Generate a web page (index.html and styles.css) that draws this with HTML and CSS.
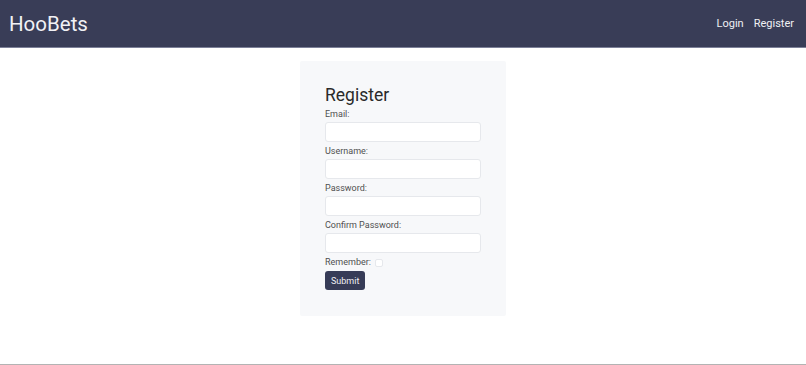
FILE: index.html
```html
<!DOCTYPE html>
<html>
<head>
<meta charset="utf-8">
<link rel="stylesheet" href="styles.css">
</head>
<body>
<header class="topbar">
  <div class="brand">HooBets</div>
  <nav class="nav">
    <a href="#" class="nav-link">Login</a>
    <a href="#" class="nav-link">Register</a>
  </nav>
</header>
<main class="main">
  <form class="card">
    <h1 class="title">Register</h1>
    <div class="field">
      <label class="label">Email:</label>
      <input class="input" type="text">
    </div>
    <div class="field">
      <label class="label">Username:</label>
      <input class="input" type="text">
    </div>
    <div class="field">
      <label class="label">Password:</label>
      <input class="input" type="password">
    </div>
    <div class="field">
      <label class="label">Confirm Password:</label>
      <input class="input" type="password">
    </div>
    <div class="check-row">
      <label class="label">Remember:</label>
      <span class="checkbox"></span>
    </div>
    <button type="button" class="submit">Submit</button>
  </form>
</main>
<footer class="footer"></footer>
</body>
</html>
```
FILE: styles.css
```css
* { box-sizing: border-box; }
html, body { margin: 0; padding: 0; }
body {
  font-family: Roboto, "Liberation Sans", sans-serif;
  background: #fff;
  color: #333;
  height: 365px;
  display: flex;
  flex-direction: column;
}
.topbar {
  height: 48px;
  background: #393d57;
  border-bottom: 1px solid #7c8098;
  display: flex;
  align-items: center;
  justify-content: space-between;
  padding: 0 12px 0 9px;
}
.brand {
  color: #f2f2f5;
  font-size: 20.5px;
}
.nav {
  display: flex;
  gap: 10px;
}
.nav-link {
  color: #f0f0f3;
  text-decoration: none;
  font-size: 11px;
}
.main {
  flex: 1;
  padding-top: 13px;
}
.card {
  width: 206px;
  margin: 0 auto;
  background: #f7f8fa;
  border-radius: 2px;
  padding: 23px 25px 26px;
}
.title {
  margin: 0 0 2px;
  font-weight: 400;
  font-size: 17.5px;
  line-height: 22px;
  color: #2a2a2a;
}
.field {
  display: flex;
  flex-direction: column;
  margin-bottom: 3px;
}
.label {
  font-size: 9px;
  line-height: 13px;
  color: #505050;
  margin-bottom: 1px;
}
.input {
  width: 156px;
  height: 20px;
  border: 1px solid #e6e8ec;
  border-radius: 3px;
  background: #fff;
  margin: 0;
  padding: 0 4px;
}
.check-row {
  display: flex;
  align-items: center;
  gap: 4px;
  margin-bottom: 1px;
}
.checkbox {
  width: 8px;
  height: 8px;
  border: 1px solid #e6e8ec;
  border-radius: 2px;
  background: #fff;
}
.submit {
  display: block;
  height: 19px;
  padding: 0 6px;
  background: #373c57;
  color: #f0f0f4;
  border: none;
  border-radius: 3px;
  font-family: inherit;
  font-size: 9px;
}
.footer {
  height: 1px;
  background: #b3b3b3;
}
```
